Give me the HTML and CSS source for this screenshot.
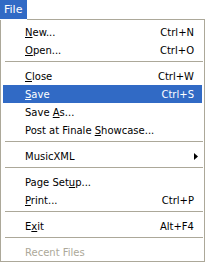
FILE: index.html
```html
<!DOCTYPE html>
<html>
<head>
<meta charset="utf-8">
<link rel="stylesheet" href="styles.css">
</head>
<body>
<div class="bar">
  <div class="title">File</div>
  <div class="rest"></div>
</div>
<div class="menu">
  <div class="item"><span class="label"><u>N</u>ew...</span><span class="key">Ctrl+N</span></div>
  <div class="item"><span class="label"><u>O</u>pen...</span><span class="key">Ctrl+O</span></div>
  <div class="sep"></div>
  <div class="item"><span class="label"><u>C</u>lose</span><span class="key">Ctrl+W</span></div>
  <div class="item active"><span class="label"><u>S</u>ave</span><span class="key">Ctrl+S</span></div>
  <div class="item"><span class="label">Save <u>A</u>s...</span></div>
  <div class="item"><span class="label">Post at Finale <u>S</u>howcase...</span></div>
  <div class="sep"></div>
  <div class="item"><span class="label">MusicXML</span><svg class="arrow" width="4" height="7" viewBox="0 0 4 7"><polygon points="0,0 4,3.5 0,7" fill="#000"/></svg></div>
  <div class="sep"></div>
  <div class="item"><span class="label">Page Set<u>u</u>p...</span></div>
  <div class="item"><span class="label"><u>P</u>rint...</span><span class="key">Ctrl+P</span></div>
  <div class="sep"></div>
  <div class="item"><span class="label">E<u>x</u>it</span><span class="key">Alt+F4</span></div>
  <div class="sep"></div>
  <div class="item disabled"><span class="label">Recent Files</span></div>
</div>
</body>
</html>
```
FILE: styles.css
```css
html, body {
  margin: 0;
  padding: 0;
  background: #ffffff;
}
body {
  font-family: "DejaVu Sans", sans-serif;
  font-size: 10px;
  color: #000;
  width: 209px;
}
.bar {
  display: flex;
  align-items: flex-start;
  width: 205px;
}
.title {
  width: 27px;
  height: 19px;
  background: #316ac5;
  color: #fff;
  font-size: 11px;
  line-height: 19px;
  padding-left: 4px;
  box-sizing: border-box;
}
.rest {
  flex: 1;
  height: 19px;
  border-bottom: 1px solid #aca899;
}
.menu {
  width: 205px;
  box-sizing: border-box;
  border: 1px solid #aca899;
  border-top: none;
  padding: 3px 2px 0 2px;
}
.item {
  display: flex;
  align-items: center;
  height: 18px;
  padding: 0 8px 0 22px;
}
.label {
  flex: 1;
  white-space: nowrap;
}
.key {
  white-space: nowrap;
}
.item u {
  text-decoration: underline;
  text-underline-offset: 1px;
}
.active {
  background: #316ac5;
  color: #fff;
}
.disabled {
  color: #aca899;
}
.arrow {
  display: block;
  margin-right: -4px;
}
.sep {
  height: 8px;
  box-sizing: border-box;
  padding: 2px 0 0 2px;
}
.sep::before {
  content: "";
  display: block;
  height: 1px;
  width: 198px;
  background: #aca899;
}
```
